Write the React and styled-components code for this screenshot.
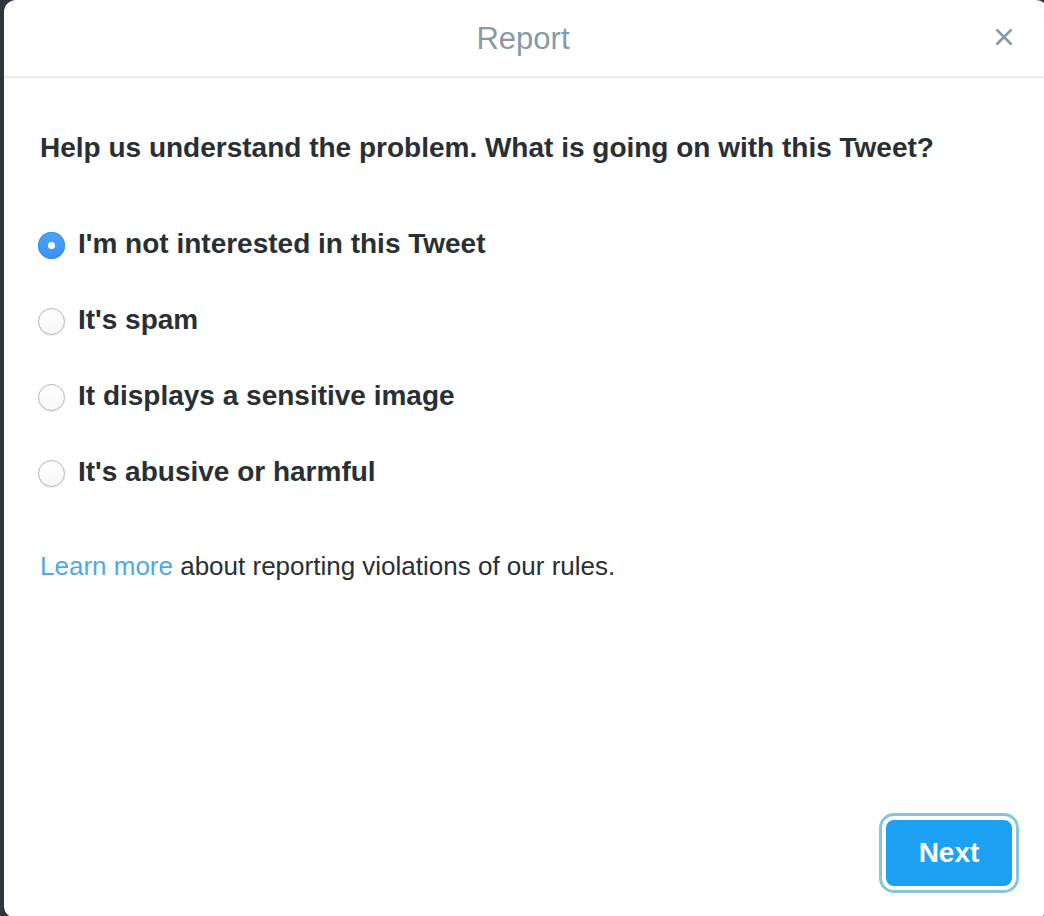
import React, { useState } from "react";
import styled, { createGlobalStyle } from "styled-components";

const GlobalStyle = createGlobalStyle`
  html, body {
    margin: 0;
    padding: 0;
    background: #2f353a;
    overflow: hidden;
  }
  body {
    font-family: "Liberation Sans", Arial, sans-serif;
    -webkit-font-smoothing: antialiased;
  }
  * { box-sizing: border-box; }
`;

const Backdrop = styled.div`
  width: 1044px;
  height: 916px;
  overflow: hidden;
  padding-left: 4px;
`;

const Modal = styled.div`
  width: 1044px;
  height: 918px;
  background: #fff;
  border-radius: 12px;
  display: flex;
  flex-direction: column;
`;

const Header = styled.div`
  position: relative;
  height: 78px;
  padding: 2px 6px 0 0;
  border-bottom: 2px solid #e6ecf0;
  display: flex;
  align-items: center;
  justify-content: center;
`;

const Title = styled.h2`
  margin: 0;
  font-size: 31px;
  font-weight: 400;
  line-height: 74px;
  color: #8899a6;
`;

const CloseButton = styled.button`
  position: absolute;
  top: 24px;
  right: 31px;
  width: 26px;
  height: 26px;
  padding: 0;
  border: 0;
  background: transparent;
  display: flex;
  align-items: center;
  justify-content: center;
  cursor: pointer;
`;

const Body = styled.div`
  flex: 1;
  padding: 52px 34px 0 34px;
  display: flex;
  flex-direction: column;
`;

const Question = styled.h3`
  margin: 0;
  padding-left: 2px;
  font-size: 28px;
  font-weight: 700;
  line-height: 36px;
  color: #292f33;
`;

const OptionList = styled.div`
  margin-top: 60px;
  display: flex;
  flex-direction: column;
  gap: 40px;
`;

const OptionRow = styled.label`
  display: flex;
  align-items: center;
  gap: 13px;
  height: 36px;
  cursor: pointer;
`;

const Radio = styled.span`
  width: 27px;
  height: 27px;
  margin-top: 3px;
  border-radius: 50%;
  flex: none;
  display: flex;
  align-items: center;
  justify-content: center;
  background: ${(p) =>
    p.$checked
      ? "linear-gradient(#4ea3fb, #3a8ff5)"
      : "linear-gradient(#ffffff, #f7f7f7)"};
  border: ${(p) => (p.$checked ? "none" : "1px solid #b3b3b3")};
  box-shadow: ${(p) =>
    p.$checked ? "inset 0 0 0 1px #3a8ef0" : "0 1px 1px rgba(0,0,0,0.08)"};

  &::after {
    content: "";
    display: ${(p) => (p.$checked ? "block" : "none")};
    width: 7px;
    height: 7px;
    border-radius: 50%;
    background: #fff;
  }
`;

const OptionText = styled.span`
  font-size: 28px;
  font-weight: 700;
  line-height: 36px;
  color: #292f33;
`;

const Help = styled.p`
  margin: 59px 0 0 0;
  padding-left: 2px;
  font-size: 26px;
  line-height: 34px;
  color: #292f33;
`;

const Link = styled.a`
  color: #4ea8ef;
  text-decoration: none;
`;

const Footer = styled.div`
  display: flex;
  justify-content: flex-end;
  padding: 0 36px 32px 0;
`;

const NextButton = styled.button`
  width: 126px;
  height: 66px;
  border: 0;
  border-radius: 8px;
  background: #1da1f2;
  color: #fff;
  font-family: "Liberation Sans", Arial, sans-serif;
  font-size: 28px;
  font-weight: 700;
  box-shadow: 0 0 0 4px #fff, 0 0 0 7px #88c4db;
  cursor: pointer;
`;

const options = [
  "I'm not interested in this Tweet",
  "It's spam",
  "It displays a sensitive image",
  "It's abusive or harmful",
];

export default function App() {
  const [selected, setSelected] = useState(0);
  return (
    <>
      <GlobalStyle />
      <Backdrop>
        <Modal>
          <Header>
            <Title>Report</Title>
            <CloseButton aria-label="Close">
              <svg width="18" height="18" viewBox="0 0 18 18">
                <path
                  d="M1.5 1.5 L16.5 16.5 M16.5 1.5 L1.5 16.5"
                  stroke="#8899a6"
                  strokeWidth="2.6"
                  strokeLinecap="butt"
                  fill="none"
                />
              </svg>
            </CloseButton>
          </Header>
          <Body>
            <Question>
              Help us understand the problem. What is going on with this Tweet?
            </Question>
            <OptionList>
              {options.map((o, i) => (
                <OptionRow key={o} onClick={() => setSelected(i)}>
                  <Radio $checked={selected === i} />
                  <OptionText>{o}</OptionText>
                </OptionRow>
              ))}
            </OptionList>
            <Help>
              <Link href="#">Learn more</Link> about reporting violations of our
              rules.
            </Help>
          </Body>
          <Footer>
            <NextButton>Next</NextButton>
          </Footer>
        </Modal>
      </Backdrop>
    </>
  );
}
